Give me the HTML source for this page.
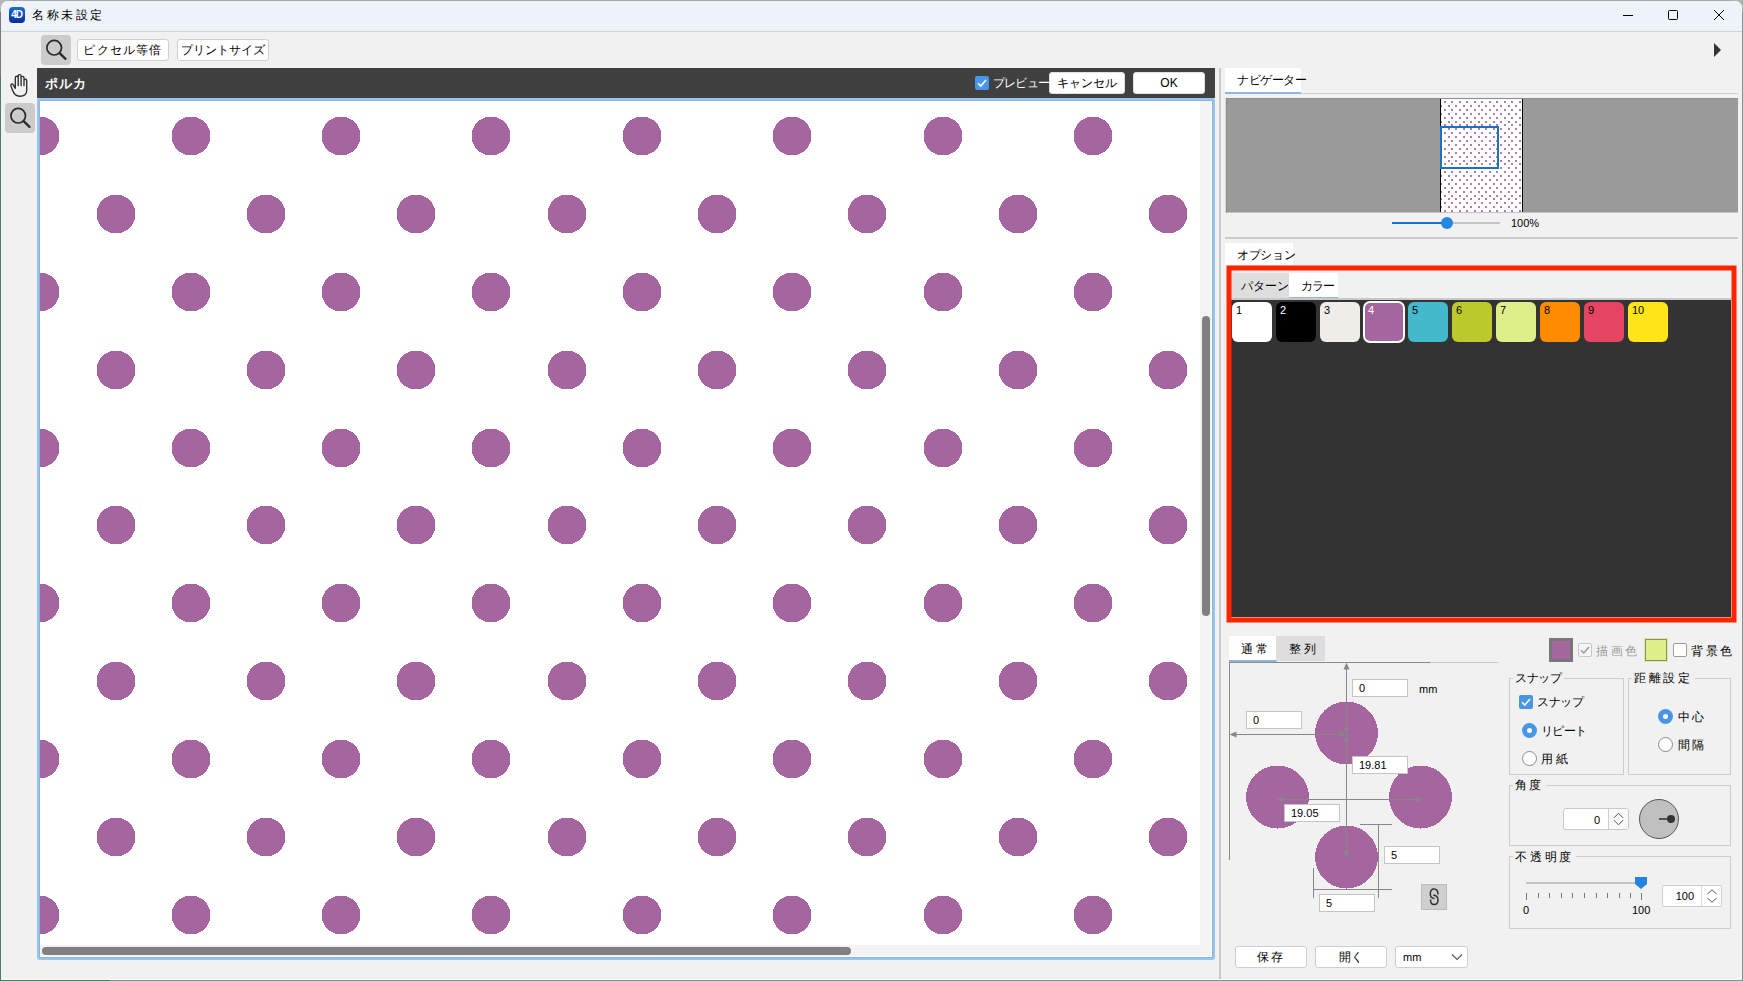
<!DOCTYPE html>
<html><head><meta charset="utf-8">
<style>
*{box-sizing:border-box;margin:0;padding:0}
html,body{width:1743px;height:981px;overflow:hidden}
body{background:#f1f1f1;font-family:"Liberation Sans",sans-serif;font-size:12px;color:#000;position:relative}
.a{position:absolute}
.btn{position:absolute;background:#fff;border:1px solid #cfcfcf;border-radius:3px;text-align:center;font-size:12px;line-height:20px;color:#000;white-space:nowrap}
.inp{position:absolute;background:#fff;border:1px solid #c4c4c4;font-size:11px;line-height:16px;padding-left:6px;color:#000}
.t{position:absolute;white-space:nowrap;font-size:12px;line-height:14px}
.sw{position:absolute;top:302px;width:40px;height:40px;border-radius:6px;font-size:11px;line-height:12px;padding:2px 0 0 4px}
.grp{position:absolute;border:1px solid #cdcdcd}
.gt{position:absolute;background:#f1f1f1;padding:0 2px;font-size:12px;line-height:14px;white-space:nowrap}
</style></head><body>
<!-- desktop edges -->
<div class="a" style="left:0;top:0;width:1px;height:981px;background:#4e7a68"></div><div class="a" style="left:0;top:0;width:1px;height:76px;background:#7a7a7a"></div>
<div class="a" style="left:0;top:980px;width:1743px;height:1px;background:#8a8f92"></div><div class="a" style="left:0;top:980px;width:110px;height:1px;background:#4e7a68"></div>
<div class="a" style="left:1742px;top:0;width:1px;height:981px;background:#8f8f8f"></div>
<div class="a" style="left:0;top:0;width:1743px;height:1px;background:#a9a9a9"></div>
<div class="a" style="left:0;top:0;width:12px;height:12px;background:#b4b4b4"></div><div class="a" style="left:1731px;top:0;width:12px;height:12px;background:#b4b4b4"></div>
<div class="a" style="left:1px;top:1px;width:1741px;height:979px;background:#f1f1f1;border-radius:7px 7px 5px 5px;box-shadow:inset 0 -1px 0 #fbfbfb"></div>
<!-- title bar -->
<div class="a" style="left:1px;top:1px;width:1741px;height:31px;background:#eef3f9;border-bottom:1px solid #d2d2d2;border-radius:7px 7px 0 0"></div>
<div class="a" style="left:9px;top:7px;width:16px;height:16px;border-radius:4px;background:linear-gradient(#1a6fd0,#0a2a9a);color:#fff;font-size:10px;font-weight:bold;line-height:16px;text-align:center;letter-spacing:-1.2px;text-indent:-1px">4D</div>
<div class="t" style="left:32px;top:8px;font-size:12px;line-height:15px;letter-spacing:2.6px">名称未設定</div>
<div class="a" style="left:1623px;top:15px;width:10px;height:1px;background:#000"></div>
<div class="a" style="left:1668px;top:10px;width:10px;height:10px;border:1px solid #000;border-radius:1.5px"></div>
<svg class="a" style="left:1713px;top:9px" width="12" height="12" viewBox="0 0 12 12"><path d="M1 1L11 11M11 1L1 11" stroke="#000" stroke-width="1"/></svg>
<!-- toolbar -->
<div class="a" style="left:41px;top:35px;width:30px;height:30px;background:#cbcbcb;border-radius:4px"></div>
<svg class="a" style="left:41px;top:35px" width="30" height="30" viewBox="0 0 30 30"><circle cx="13.2" cy="12.7" r="7.3" fill="none" stroke="#2a2a2a" stroke-width="1.7"/><path d="M18.6 18.2L24.5 23.9" stroke="#2a2a2a" stroke-width="2.3" stroke-linecap="round"/></svg>
<div class="btn" style="left:77px;top:39px;width:92px;height:22px;letter-spacing:1.2px">ピクセル等倍</div>
<div class="btn" style="left:177px;top:39px;width:92px;height:22px">プリントサイズ</div>
<svg class="a" style="left:1713px;top:42px" width="10" height="16" viewBox="0 0 10 16"><path d="M1 1L8 8L1 15Z" fill="#333"/></svg>
<!-- left tools -->
<svg class="a" style="left:6px;top:70px" width="26" height="30" viewBox="0 0 26 30"><path d="M9.3 18.3V7.7a1.45 1.45 0 0 1 2.9 0V15.6M12.2 7.7V6.1a1.45 1.45 0 0 1 2.9 0V15.6M15.1 7.8a1.45 1.45 0 0 1 2.9 0V15.6M18 10.6a1.35 1.35 0 0 1 2.7 0V20.8C20.7 24.4 18 26.2 13.8 26.2C10.2 26.2 7.6 23.8 6.6 20.3L4.8 15.7a1.3 1.3 0 0 1 2.3 -1.1L9.3 18.3" fill="none" stroke="#2e2e2e" stroke-width="1.35" stroke-linejoin="round" stroke-linecap="round"/></svg>
<div class="a" style="left:5px;top:103px;width:30px;height:30px;background:#cbcbcb;border-radius:4px"></div>
<svg class="a" style="left:5px;top:103px" width="30" height="30" viewBox="0 0 30 30"><circle cx="13.2" cy="12.7" r="7.3" fill="none" stroke="#2a2a2a" stroke-width="1.7"/><path d="M18.6 18.2L24.5 23.9" stroke="#2a2a2a" stroke-width="2.3" stroke-linecap="round"/></svg>
<!-- CANVAS -->
<div class="a" style="left:37px;top:68px;width:1178px;height:30px;background:#404040"></div>
<div class="t" style="left:45px;top:76px;color:#fff;font-weight:bold;font-size:13px;line-height:15px;letter-spacing:1px">ポルカ</div>
<div class="a" style="left:975px;top:76px;width:14px;height:14px;background:#4a96e6;border-radius:2px"></div>
<svg class="a" style="left:975px;top:76px" width="14" height="14" viewBox="0 0 14 14"><path d="M3 7.2L5.8 10L11 4" fill="none" stroke="#fff" stroke-width="1.6"/></svg>
<div class="t" style="left:993px;top:76px;color:#fff;letter-spacing:-0.8px">プレビュー</div>
<div class="btn" style="left:1049px;top:72px;width:76px;height:22px;border-color:#e0e0e0">キャンセル</div>
<div class="btn" style="left:1133px;top:72px;width:72px;height:22px;border-color:#e0e0e0">OK</div>
<div class="a" style="left:37px;top:98px;width:1178px;height:862px;border:2px solid #98c5ed;box-shadow:inset 0 0 0 1px #88b4de;background:#fff;border-radius:2px 2px 3px 3px"></div>
<svg class="a" style="left:40px;top:101px" width="1160" height="844" viewBox="0 0 1160 844"><path fill="#a5669f" d="M-6 16h12v1h2v1h2v1h2v1h1v1h1v1h1v1h1v2h1v2h1v2h1v12h-1v2h-1v2h-1v2h-1v1h-1v1h-1v1h-1v1h-2v1h-2v1h-2v1h-12v-1h-2v-1h-2v-1h-2v-1h-1v-1h-1v-1h-1v-1h-1v-2h-1v-2h-1v-2h-1v-12h1v-2h1v-2h1v-2h1v-1h1v-1h1v-1h1v-1h2v-1h2v-1h2v-1zM145 16h12v1h2v1h2v1h2v1h1v1h1v1h1v1h1v2h1v2h1v2h1v12h-1v2h-1v2h-1v2h-1v1h-1v1h-1v1h-1v1h-2v1h-2v1h-2v1h-12v-1h-2v-1h-2v-1h-2v-1h-1v-1h-1v-1h-1v-1h-1v-2h-1v-2h-1v-2h-1v-12h1v-2h1v-2h1v-2h1v-1h1v-1h1v-1h1v-1h2v-1h2v-1h2v-1zM295 16h12v1h2v1h2v1h2v1h1v1h1v1h1v1h1v2h1v2h1v2h1v12h-1v2h-1v2h-1v2h-1v1h-1v1h-1v1h-1v1h-2v1h-2v1h-2v1h-12v-1h-2v-1h-2v-1h-2v-1h-1v-1h-1v-1h-1v-1h-1v-2h-1v-2h-1v-2h-1v-12h1v-2h1v-2h1v-2h1v-1h1v-1h1v-1h1v-1h2v-1h2v-1h2v-1zM445 16h12v1h2v1h2v1h2v1h1v1h1v1h1v1h1v2h1v2h1v2h1v12h-1v2h-1v2h-1v2h-1v1h-1v1h-1v1h-1v1h-2v1h-2v1h-2v1h-12v-1h-2v-1h-2v-1h-2v-1h-1v-1h-1v-1h-1v-1h-1v-2h-1v-2h-1v-2h-1v-12h1v-2h1v-2h1v-2h1v-1h1v-1h1v-1h1v-1h2v-1h2v-1h2v-1zM596 16h12v1h2v1h2v1h2v1h1v1h1v1h1v1h1v2h1v2h1v2h1v12h-1v2h-1v2h-1v2h-1v1h-1v1h-1v1h-1v1h-2v1h-2v1h-2v1h-12v-1h-2v-1h-2v-1h-2v-1h-1v-1h-1v-1h-1v-1h-1v-2h-1v-2h-1v-2h-1v-12h1v-2h1v-2h1v-2h1v-1h1v-1h1v-1h1v-1h2v-1h2v-1h2v-1zM746 16h12v1h2v1h2v1h2v1h1v1h1v1h1v1h1v2h1v2h1v2h1v12h-1v2h-1v2h-1v2h-1v1h-1v1h-1v1h-1v1h-2v1h-2v1h-2v1h-12v-1h-2v-1h-2v-1h-2v-1h-1v-1h-1v-1h-1v-1h-1v-2h-1v-2h-1v-2h-1v-12h1v-2h1v-2h1v-2h1v-1h1v-1h1v-1h1v-1h2v-1h2v-1h2v-1zM897 16h12v1h2v1h2v1h2v1h1v1h1v1h1v1h1v2h1v2h1v2h1v12h-1v2h-1v2h-1v2h-1v1h-1v1h-1v1h-1v1h-2v1h-2v1h-2v1h-12v-1h-2v-1h-2v-1h-2v-1h-1v-1h-1v-1h-1v-1h-1v-2h-1v-2h-1v-2h-1v-12h1v-2h1v-2h1v-2h1v-1h1v-1h1v-1h1v-1h2v-1h2v-1h2v-1zM1047 16h12v1h2v1h2v1h2v1h1v1h1v1h1v1h1v2h1v2h1v2h1v12h-1v2h-1v2h-1v2h-1v1h-1v1h-1v1h-1v1h-2v1h-2v1h-2v1h-12v-1h-2v-1h-2v-1h-2v-1h-1v-1h-1v-1h-1v-1h-1v-2h-1v-2h-1v-2h-1v-12h1v-2h1v-2h1v-2h1v-1h1v-1h1v-1h1v-1h2v-1h2v-1h2v-1zM70 94h12v1h2v1h2v1h2v1h1v1h1v1h1v1h1v2h1v2h1v2h1v12h-1v2h-1v2h-1v2h-1v1h-1v1h-1v1h-1v1h-2v1h-2v1h-2v1h-12v-1h-2v-1h-2v-1h-2v-1h-1v-1h-1v-1h-1v-1h-1v-2h-1v-2h-1v-2h-1v-12h1v-2h1v-2h1v-2h1v-1h1v-1h1v-1h1v-1h2v-1h2v-1h2v-1zM220 94h12v1h2v1h2v1h2v1h1v1h1v1h1v1h1v2h1v2h1v2h1v12h-1v2h-1v2h-1v2h-1v1h-1v1h-1v1h-1v1h-2v1h-2v1h-2v1h-12v-1h-2v-1h-2v-1h-2v-1h-1v-1h-1v-1h-1v-1h-1v-2h-1v-2h-1v-2h-1v-12h1v-2h1v-2h1v-2h1v-1h1v-1h1v-1h1v-1h2v-1h2v-1h2v-1zM370 94h12v1h2v1h2v1h2v1h1v1h1v1h1v1h1v2h1v2h1v2h1v12h-1v2h-1v2h-1v2h-1v1h-1v1h-1v1h-1v1h-2v1h-2v1h-2v1h-12v-1h-2v-1h-2v-1h-2v-1h-1v-1h-1v-1h-1v-1h-1v-2h-1v-2h-1v-2h-1v-12h1v-2h1v-2h1v-2h1v-1h1v-1h1v-1h1v-1h2v-1h2v-1h2v-1zM521 94h12v1h2v1h2v1h2v1h1v1h1v1h1v1h1v2h1v2h1v2h1v12h-1v2h-1v2h-1v2h-1v1h-1v1h-1v1h-1v1h-2v1h-2v1h-2v1h-12v-1h-2v-1h-2v-1h-2v-1h-1v-1h-1v-1h-1v-1h-1v-2h-1v-2h-1v-2h-1v-12h1v-2h1v-2h1v-2h1v-1h1v-1h1v-1h1v-1h2v-1h2v-1h2v-1zM671 94h12v1h2v1h2v1h2v1h1v1h1v1h1v1h1v2h1v2h1v2h1v12h-1v2h-1v2h-1v2h-1v1h-1v1h-1v1h-1v1h-2v1h-2v1h-2v1h-12v-1h-2v-1h-2v-1h-2v-1h-1v-1h-1v-1h-1v-1h-1v-2h-1v-2h-1v-2h-1v-12h1v-2h1v-2h1v-2h1v-1h1v-1h1v-1h1v-1h2v-1h2v-1h2v-1zM821 94h12v1h2v1h2v1h2v1h1v1h1v1h1v1h1v2h1v2h1v2h1v12h-1v2h-1v2h-1v2h-1v1h-1v1h-1v1h-1v1h-2v1h-2v1h-2v1h-12v-1h-2v-1h-2v-1h-2v-1h-1v-1h-1v-1h-1v-1h-1v-2h-1v-2h-1v-2h-1v-12h1v-2h1v-2h1v-2h1v-1h1v-1h1v-1h1v-1h2v-1h2v-1h2v-1zM972 94h12v1h2v1h2v1h2v1h1v1h1v1h1v1h1v2h1v2h1v2h1v12h-1v2h-1v2h-1v2h-1v1h-1v1h-1v1h-1v1h-2v1h-2v1h-2v1h-12v-1h-2v-1h-2v-1h-2v-1h-1v-1h-1v-1h-1v-1h-1v-2h-1v-2h-1v-2h-1v-12h1v-2h1v-2h1v-2h1v-1h1v-1h1v-1h1v-1h2v-1h2v-1h2v-1zM1122 94h12v1h2v1h2v1h2v1h1v1h1v1h1v1h1v2h1v2h1v2h1v12h-1v2h-1v2h-1v2h-1v1h-1v1h-1v1h-1v1h-2v1h-2v1h-2v1h-12v-1h-2v-1h-2v-1h-2v-1h-1v-1h-1v-1h-1v-1h-1v-2h-1v-2h-1v-2h-1v-12h1v-2h1v-2h1v-2h1v-1h1v-1h1v-1h1v-1h2v-1h2v-1h2v-1zM-6 172h12v1h2v1h2v1h2v1h1v1h1v1h1v1h1v2h1v2h1v2h1v12h-1v2h-1v2h-1v2h-1v1h-1v1h-1v1h-1v1h-2v1h-2v1h-2v1h-12v-1h-2v-1h-2v-1h-2v-1h-1v-1h-1v-1h-1v-1h-1v-2h-1v-2h-1v-2h-1v-12h1v-2h1v-2h1v-2h1v-1h1v-1h1v-1h1v-1h2v-1h2v-1h2v-1zM145 172h12v1h2v1h2v1h2v1h1v1h1v1h1v1h1v2h1v2h1v2h1v12h-1v2h-1v2h-1v2h-1v1h-1v1h-1v1h-1v1h-2v1h-2v1h-2v1h-12v-1h-2v-1h-2v-1h-2v-1h-1v-1h-1v-1h-1v-1h-1v-2h-1v-2h-1v-2h-1v-12h1v-2h1v-2h1v-2h1v-1h1v-1h1v-1h1v-1h2v-1h2v-1h2v-1zM295 172h12v1h2v1h2v1h2v1h1v1h1v1h1v1h1v2h1v2h1v2h1v12h-1v2h-1v2h-1v2h-1v1h-1v1h-1v1h-1v1h-2v1h-2v1h-2v1h-12v-1h-2v-1h-2v-1h-2v-1h-1v-1h-1v-1h-1v-1h-1v-2h-1v-2h-1v-2h-1v-12h1v-2h1v-2h1v-2h1v-1h1v-1h1v-1h1v-1h2v-1h2v-1h2v-1zM445 172h12v1h2v1h2v1h2v1h1v1h1v1h1v1h1v2h1v2h1v2h1v12h-1v2h-1v2h-1v2h-1v1h-1v1h-1v1h-1v1h-2v1h-2v1h-2v1h-12v-1h-2v-1h-2v-1h-2v-1h-1v-1h-1v-1h-1v-1h-1v-2h-1v-2h-1v-2h-1v-12h1v-2h1v-2h1v-2h1v-1h1v-1h1v-1h1v-1h2v-1h2v-1h2v-1zM596 172h12v1h2v1h2v1h2v1h1v1h1v1h1v1h1v2h1v2h1v2h1v12h-1v2h-1v2h-1v2h-1v1h-1v1h-1v1h-1v1h-2v1h-2v1h-2v1h-12v-1h-2v-1h-2v-1h-2v-1h-1v-1h-1v-1h-1v-1h-1v-2h-1v-2h-1v-2h-1v-12h1v-2h1v-2h1v-2h1v-1h1v-1h1v-1h1v-1h2v-1h2v-1h2v-1zM746 172h12v1h2v1h2v1h2v1h1v1h1v1h1v1h1v2h1v2h1v2h1v12h-1v2h-1v2h-1v2h-1v1h-1v1h-1v1h-1v1h-2v1h-2v1h-2v1h-12v-1h-2v-1h-2v-1h-2v-1h-1v-1h-1v-1h-1v-1h-1v-2h-1v-2h-1v-2h-1v-12h1v-2h1v-2h1v-2h1v-1h1v-1h1v-1h1v-1h2v-1h2v-1h2v-1zM897 172h12v1h2v1h2v1h2v1h1v1h1v1h1v1h1v2h1v2h1v2h1v12h-1v2h-1v2h-1v2h-1v1h-1v1h-1v1h-1v1h-2v1h-2v1h-2v1h-12v-1h-2v-1h-2v-1h-2v-1h-1v-1h-1v-1h-1v-1h-1v-2h-1v-2h-1v-2h-1v-12h1v-2h1v-2h1v-2h1v-1h1v-1h1v-1h1v-1h2v-1h2v-1h2v-1zM1047 172h12v1h2v1h2v1h2v1h1v1h1v1h1v1h1v2h1v2h1v2h1v12h-1v2h-1v2h-1v2h-1v1h-1v1h-1v1h-1v1h-2v1h-2v1h-2v1h-12v-1h-2v-1h-2v-1h-2v-1h-1v-1h-1v-1h-1v-1h-1v-2h-1v-2h-1v-2h-1v-12h1v-2h1v-2h1v-2h1v-1h1v-1h1v-1h1v-1h2v-1h2v-1h2v-1zM70 250h12v1h2v1h2v1h2v1h1v1h1v1h1v1h1v2h1v2h1v2h1v12h-1v2h-1v2h-1v2h-1v1h-1v1h-1v1h-1v1h-2v1h-2v1h-2v1h-12v-1h-2v-1h-2v-1h-2v-1h-1v-1h-1v-1h-1v-1h-1v-2h-1v-2h-1v-2h-1v-12h1v-2h1v-2h1v-2h1v-1h1v-1h1v-1h1v-1h2v-1h2v-1h2v-1zM220 250h12v1h2v1h2v1h2v1h1v1h1v1h1v1h1v2h1v2h1v2h1v12h-1v2h-1v2h-1v2h-1v1h-1v1h-1v1h-1v1h-2v1h-2v1h-2v1h-12v-1h-2v-1h-2v-1h-2v-1h-1v-1h-1v-1h-1v-1h-1v-2h-1v-2h-1v-2h-1v-12h1v-2h1v-2h1v-2h1v-1h1v-1h1v-1h1v-1h2v-1h2v-1h2v-1zM370 250h12v1h2v1h2v1h2v1h1v1h1v1h1v1h1v2h1v2h1v2h1v12h-1v2h-1v2h-1v2h-1v1h-1v1h-1v1h-1v1h-2v1h-2v1h-2v1h-12v-1h-2v-1h-2v-1h-2v-1h-1v-1h-1v-1h-1v-1h-1v-2h-1v-2h-1v-2h-1v-12h1v-2h1v-2h1v-2h1v-1h1v-1h1v-1h1v-1h2v-1h2v-1h2v-1zM521 250h12v1h2v1h2v1h2v1h1v1h1v1h1v1h1v2h1v2h1v2h1v12h-1v2h-1v2h-1v2h-1v1h-1v1h-1v1h-1v1h-2v1h-2v1h-2v1h-12v-1h-2v-1h-2v-1h-2v-1h-1v-1h-1v-1h-1v-1h-1v-2h-1v-2h-1v-2h-1v-12h1v-2h1v-2h1v-2h1v-1h1v-1h1v-1h1v-1h2v-1h2v-1h2v-1zM671 250h12v1h2v1h2v1h2v1h1v1h1v1h1v1h1v2h1v2h1v2h1v12h-1v2h-1v2h-1v2h-1v1h-1v1h-1v1h-1v1h-2v1h-2v1h-2v1h-12v-1h-2v-1h-2v-1h-2v-1h-1v-1h-1v-1h-1v-1h-1v-2h-1v-2h-1v-2h-1v-12h1v-2h1v-2h1v-2h1v-1h1v-1h1v-1h1v-1h2v-1h2v-1h2v-1zM821 250h12v1h2v1h2v1h2v1h1v1h1v1h1v1h1v2h1v2h1v2h1v12h-1v2h-1v2h-1v2h-1v1h-1v1h-1v1h-1v1h-2v1h-2v1h-2v1h-12v-1h-2v-1h-2v-1h-2v-1h-1v-1h-1v-1h-1v-1h-1v-2h-1v-2h-1v-2h-1v-12h1v-2h1v-2h1v-2h1v-1h1v-1h1v-1h1v-1h2v-1h2v-1h2v-1zM972 250h12v1h2v1h2v1h2v1h1v1h1v1h1v1h1v2h1v2h1v2h1v12h-1v2h-1v2h-1v2h-1v1h-1v1h-1v1h-1v1h-2v1h-2v1h-2v1h-12v-1h-2v-1h-2v-1h-2v-1h-1v-1h-1v-1h-1v-1h-1v-2h-1v-2h-1v-2h-1v-12h1v-2h1v-2h1v-2h1v-1h1v-1h1v-1h1v-1h2v-1h2v-1h2v-1zM1122 250h12v1h2v1h2v1h2v1h1v1h1v1h1v1h1v2h1v2h1v2h1v12h-1v2h-1v2h-1v2h-1v1h-1v1h-1v1h-1v1h-2v1h-2v1h-2v1h-12v-1h-2v-1h-2v-1h-2v-1h-1v-1h-1v-1h-1v-1h-1v-2h-1v-2h-1v-2h-1v-12h1v-2h1v-2h1v-2h1v-1h1v-1h1v-1h1v-1h2v-1h2v-1h2v-1zM-6 328h12v1h2v1h2v1h2v1h1v1h1v1h1v1h1v2h1v2h1v2h1v12h-1v2h-1v2h-1v2h-1v1h-1v1h-1v1h-1v1h-2v1h-2v1h-2v1h-12v-1h-2v-1h-2v-1h-2v-1h-1v-1h-1v-1h-1v-1h-1v-2h-1v-2h-1v-2h-1v-12h1v-2h1v-2h1v-2h1v-1h1v-1h1v-1h1v-1h2v-1h2v-1h2v-1zM145 328h12v1h2v1h2v1h2v1h1v1h1v1h1v1h1v2h1v2h1v2h1v12h-1v2h-1v2h-1v2h-1v1h-1v1h-1v1h-1v1h-2v1h-2v1h-2v1h-12v-1h-2v-1h-2v-1h-2v-1h-1v-1h-1v-1h-1v-1h-1v-2h-1v-2h-1v-2h-1v-12h1v-2h1v-2h1v-2h1v-1h1v-1h1v-1h1v-1h2v-1h2v-1h2v-1zM295 328h12v1h2v1h2v1h2v1h1v1h1v1h1v1h1v2h1v2h1v2h1v12h-1v2h-1v2h-1v2h-1v1h-1v1h-1v1h-1v1h-2v1h-2v1h-2v1h-12v-1h-2v-1h-2v-1h-2v-1h-1v-1h-1v-1h-1v-1h-1v-2h-1v-2h-1v-2h-1v-12h1v-2h1v-2h1v-2h1v-1h1v-1h1v-1h1v-1h2v-1h2v-1h2v-1zM445 328h12v1h2v1h2v1h2v1h1v1h1v1h1v1h1v2h1v2h1v2h1v12h-1v2h-1v2h-1v2h-1v1h-1v1h-1v1h-1v1h-2v1h-2v1h-2v1h-12v-1h-2v-1h-2v-1h-2v-1h-1v-1h-1v-1h-1v-1h-1v-2h-1v-2h-1v-2h-1v-12h1v-2h1v-2h1v-2h1v-1h1v-1h1v-1h1v-1h2v-1h2v-1h2v-1zM596 328h12v1h2v1h2v1h2v1h1v1h1v1h1v1h1v2h1v2h1v2h1v12h-1v2h-1v2h-1v2h-1v1h-1v1h-1v1h-1v1h-2v1h-2v1h-2v1h-12v-1h-2v-1h-2v-1h-2v-1h-1v-1h-1v-1h-1v-1h-1v-2h-1v-2h-1v-2h-1v-12h1v-2h1v-2h1v-2h1v-1h1v-1h1v-1h1v-1h2v-1h2v-1h2v-1zM746 328h12v1h2v1h2v1h2v1h1v1h1v1h1v1h1v2h1v2h1v2h1v12h-1v2h-1v2h-1v2h-1v1h-1v1h-1v1h-1v1h-2v1h-2v1h-2v1h-12v-1h-2v-1h-2v-1h-2v-1h-1v-1h-1v-1h-1v-1h-1v-2h-1v-2h-1v-2h-1v-12h1v-2h1v-2h1v-2h1v-1h1v-1h1v-1h1v-1h2v-1h2v-1h2v-1zM897 328h12v1h2v1h2v1h2v1h1v1h1v1h1v1h1v2h1v2h1v2h1v12h-1v2h-1v2h-1v2h-1v1h-1v1h-1v1h-1v1h-2v1h-2v1h-2v1h-12v-1h-2v-1h-2v-1h-2v-1h-1v-1h-1v-1h-1v-1h-1v-2h-1v-2h-1v-2h-1v-12h1v-2h1v-2h1v-2h1v-1h1v-1h1v-1h1v-1h2v-1h2v-1h2v-1zM1047 328h12v1h2v1h2v1h2v1h1v1h1v1h1v1h1v2h1v2h1v2h1v12h-1v2h-1v2h-1v2h-1v1h-1v1h-1v1h-1v1h-2v1h-2v1h-2v1h-12v-1h-2v-1h-2v-1h-2v-1h-1v-1h-1v-1h-1v-1h-1v-2h-1v-2h-1v-2h-1v-12h1v-2h1v-2h1v-2h1v-1h1v-1h1v-1h1v-1h2v-1h2v-1h2v-1zM70 405h12v1h2v1h2v1h2v1h1v1h1v1h1v1h1v2h1v2h1v2h1v12h-1v2h-1v2h-1v2h-1v1h-1v1h-1v1h-1v1h-2v1h-2v1h-2v1h-12v-1h-2v-1h-2v-1h-2v-1h-1v-1h-1v-1h-1v-1h-1v-2h-1v-2h-1v-2h-1v-12h1v-2h1v-2h1v-2h1v-1h1v-1h1v-1h1v-1h2v-1h2v-1h2v-1zM220 405h12v1h2v1h2v1h2v1h1v1h1v1h1v1h1v2h1v2h1v2h1v12h-1v2h-1v2h-1v2h-1v1h-1v1h-1v1h-1v1h-2v1h-2v1h-2v1h-12v-1h-2v-1h-2v-1h-2v-1h-1v-1h-1v-1h-1v-1h-1v-2h-1v-2h-1v-2h-1v-12h1v-2h1v-2h1v-2h1v-1h1v-1h1v-1h1v-1h2v-1h2v-1h2v-1zM370 405h12v1h2v1h2v1h2v1h1v1h1v1h1v1h1v2h1v2h1v2h1v12h-1v2h-1v2h-1v2h-1v1h-1v1h-1v1h-1v1h-2v1h-2v1h-2v1h-12v-1h-2v-1h-2v-1h-2v-1h-1v-1h-1v-1h-1v-1h-1v-2h-1v-2h-1v-2h-1v-12h1v-2h1v-2h1v-2h1v-1h1v-1h1v-1h1v-1h2v-1h2v-1h2v-1zM521 405h12v1h2v1h2v1h2v1h1v1h1v1h1v1h1v2h1v2h1v2h1v12h-1v2h-1v2h-1v2h-1v1h-1v1h-1v1h-1v1h-2v1h-2v1h-2v1h-12v-1h-2v-1h-2v-1h-2v-1h-1v-1h-1v-1h-1v-1h-1v-2h-1v-2h-1v-2h-1v-12h1v-2h1v-2h1v-2h1v-1h1v-1h1v-1h1v-1h2v-1h2v-1h2v-1zM671 405h12v1h2v1h2v1h2v1h1v1h1v1h1v1h1v2h1v2h1v2h1v12h-1v2h-1v2h-1v2h-1v1h-1v1h-1v1h-1v1h-2v1h-2v1h-2v1h-12v-1h-2v-1h-2v-1h-2v-1h-1v-1h-1v-1h-1v-1h-1v-2h-1v-2h-1v-2h-1v-12h1v-2h1v-2h1v-2h1v-1h1v-1h1v-1h1v-1h2v-1h2v-1h2v-1zM821 405h12v1h2v1h2v1h2v1h1v1h1v1h1v1h1v2h1v2h1v2h1v12h-1v2h-1v2h-1v2h-1v1h-1v1h-1v1h-1v1h-2v1h-2v1h-2v1h-12v-1h-2v-1h-2v-1h-2v-1h-1v-1h-1v-1h-1v-1h-1v-2h-1v-2h-1v-2h-1v-12h1v-2h1v-2h1v-2h1v-1h1v-1h1v-1h1v-1h2v-1h2v-1h2v-1zM972 405h12v1h2v1h2v1h2v1h1v1h1v1h1v1h1v2h1v2h1v2h1v12h-1v2h-1v2h-1v2h-1v1h-1v1h-1v1h-1v1h-2v1h-2v1h-2v1h-12v-1h-2v-1h-2v-1h-2v-1h-1v-1h-1v-1h-1v-1h-1v-2h-1v-2h-1v-2h-1v-12h1v-2h1v-2h1v-2h1v-1h1v-1h1v-1h1v-1h2v-1h2v-1h2v-1zM1122 405h12v1h2v1h2v1h2v1h1v1h1v1h1v1h1v2h1v2h1v2h1v12h-1v2h-1v2h-1v2h-1v1h-1v1h-1v1h-1v1h-2v1h-2v1h-2v1h-12v-1h-2v-1h-2v-1h-2v-1h-1v-1h-1v-1h-1v-1h-1v-2h-1v-2h-1v-2h-1v-12h1v-2h1v-2h1v-2h1v-1h1v-1h1v-1h1v-1h2v-1h2v-1h2v-1zM-6 483h12v1h2v1h2v1h2v1h1v1h1v1h1v1h1v2h1v2h1v2h1v12h-1v2h-1v2h-1v2h-1v1h-1v1h-1v1h-1v1h-2v1h-2v1h-2v1h-12v-1h-2v-1h-2v-1h-2v-1h-1v-1h-1v-1h-1v-1h-1v-2h-1v-2h-1v-2h-1v-12h1v-2h1v-2h1v-2h1v-1h1v-1h1v-1h1v-1h2v-1h2v-1h2v-1zM145 483h12v1h2v1h2v1h2v1h1v1h1v1h1v1h1v2h1v2h1v2h1v12h-1v2h-1v2h-1v2h-1v1h-1v1h-1v1h-1v1h-2v1h-2v1h-2v1h-12v-1h-2v-1h-2v-1h-2v-1h-1v-1h-1v-1h-1v-1h-1v-2h-1v-2h-1v-2h-1v-12h1v-2h1v-2h1v-2h1v-1h1v-1h1v-1h1v-1h2v-1h2v-1h2v-1zM295 483h12v1h2v1h2v1h2v1h1v1h1v1h1v1h1v2h1v2h1v2h1v12h-1v2h-1v2h-1v2h-1v1h-1v1h-1v1h-1v1h-2v1h-2v1h-2v1h-12v-1h-2v-1h-2v-1h-2v-1h-1v-1h-1v-1h-1v-1h-1v-2h-1v-2h-1v-2h-1v-12h1v-2h1v-2h1v-2h1v-1h1v-1h1v-1h1v-1h2v-1h2v-1h2v-1zM445 483h12v1h2v1h2v1h2v1h1v1h1v1h1v1h1v2h1v2h1v2h1v12h-1v2h-1v2h-1v2h-1v1h-1v1h-1v1h-1v1h-2v1h-2v1h-2v1h-12v-1h-2v-1h-2v-1h-2v-1h-1v-1h-1v-1h-1v-1h-1v-2h-1v-2h-1v-2h-1v-12h1v-2h1v-2h1v-2h1v-1h1v-1h1v-1h1v-1h2v-1h2v-1h2v-1zM596 483h12v1h2v1h2v1h2v1h1v1h1v1h1v1h1v2h1v2h1v2h1v12h-1v2h-1v2h-1v2h-1v1h-1v1h-1v1h-1v1h-2v1h-2v1h-2v1h-12v-1h-2v-1h-2v-1h-2v-1h-1v-1h-1v-1h-1v-1h-1v-2h-1v-2h-1v-2h-1v-12h1v-2h1v-2h1v-2h1v-1h1v-1h1v-1h1v-1h2v-1h2v-1h2v-1zM746 483h12v1h2v1h2v1h2v1h1v1h1v1h1v1h1v2h1v2h1v2h1v12h-1v2h-1v2h-1v2h-1v1h-1v1h-1v1h-1v1h-2v1h-2v1h-2v1h-12v-1h-2v-1h-2v-1h-2v-1h-1v-1h-1v-1h-1v-1h-1v-2h-1v-2h-1v-2h-1v-12h1v-2h1v-2h1v-2h1v-1h1v-1h1v-1h1v-1h2v-1h2v-1h2v-1zM897 483h12v1h2v1h2v1h2v1h1v1h1v1h1v1h1v2h1v2h1v2h1v12h-1v2h-1v2h-1v2h-1v1h-1v1h-1v1h-1v1h-2v1h-2v1h-2v1h-12v-1h-2v-1h-2v-1h-2v-1h-1v-1h-1v-1h-1v-1h-1v-2h-1v-2h-1v-2h-1v-12h1v-2h1v-2h1v-2h1v-1h1v-1h1v-1h1v-1h2v-1h2v-1h2v-1zM1047 483h12v1h2v1h2v1h2v1h1v1h1v1h1v1h1v2h1v2h1v2h1v12h-1v2h-1v2h-1v2h-1v1h-1v1h-1v1h-1v1h-2v1h-2v1h-2v1h-12v-1h-2v-1h-2v-1h-2v-1h-1v-1h-1v-1h-1v-1h-1v-2h-1v-2h-1v-2h-1v-12h1v-2h1v-2h1v-2h1v-1h1v-1h1v-1h1v-1h2v-1h2v-1h2v-1zM70 561h12v1h2v1h2v1h2v1h1v1h1v1h1v1h1v2h1v2h1v2h1v12h-1v2h-1v2h-1v2h-1v1h-1v1h-1v1h-1v1h-2v1h-2v1h-2v1h-12v-1h-2v-1h-2v-1h-2v-1h-1v-1h-1v-1h-1v-1h-1v-2h-1v-2h-1v-2h-1v-12h1v-2h1v-2h1v-2h1v-1h1v-1h1v-1h1v-1h2v-1h2v-1h2v-1zM220 561h12v1h2v1h2v1h2v1h1v1h1v1h1v1h1v2h1v2h1v2h1v12h-1v2h-1v2h-1v2h-1v1h-1v1h-1v1h-1v1h-2v1h-2v1h-2v1h-12v-1h-2v-1h-2v-1h-2v-1h-1v-1h-1v-1h-1v-1h-1v-2h-1v-2h-1v-2h-1v-12h1v-2h1v-2h1v-2h1v-1h1v-1h1v-1h1v-1h2v-1h2v-1h2v-1zM370 561h12v1h2v1h2v1h2v1h1v1h1v1h1v1h1v2h1v2h1v2h1v12h-1v2h-1v2h-1v2h-1v1h-1v1h-1v1h-1v1h-2v1h-2v1h-2v1h-12v-1h-2v-1h-2v-1h-2v-1h-1v-1h-1v-1h-1v-1h-1v-2h-1v-2h-1v-2h-1v-12h1v-2h1v-2h1v-2h1v-1h1v-1h1v-1h1v-1h2v-1h2v-1h2v-1zM521 561h12v1h2v1h2v1h2v1h1v1h1v1h1v1h1v2h1v2h1v2h1v12h-1v2h-1v2h-1v2h-1v1h-1v1h-1v1h-1v1h-2v1h-2v1h-2v1h-12v-1h-2v-1h-2v-1h-2v-1h-1v-1h-1v-1h-1v-1h-1v-2h-1v-2h-1v-2h-1v-12h1v-2h1v-2h1v-2h1v-1h1v-1h1v-1h1v-1h2v-1h2v-1h2v-1zM671 561h12v1h2v1h2v1h2v1h1v1h1v1h1v1h1v2h1v2h1v2h1v12h-1v2h-1v2h-1v2h-1v1h-1v1h-1v1h-1v1h-2v1h-2v1h-2v1h-12v-1h-2v-1h-2v-1h-2v-1h-1v-1h-1v-1h-1v-1h-1v-2h-1v-2h-1v-2h-1v-12h1v-2h1v-2h1v-2h1v-1h1v-1h1v-1h1v-1h2v-1h2v-1h2v-1zM821 561h12v1h2v1h2v1h2v1h1v1h1v1h1v1h1v2h1v2h1v2h1v12h-1v2h-1v2h-1v2h-1v1h-1v1h-1v1h-1v1h-2v1h-2v1h-2v1h-12v-1h-2v-1h-2v-1h-2v-1h-1v-1h-1v-1h-1v-1h-1v-2h-1v-2h-1v-2h-1v-12h1v-2h1v-2h1v-2h1v-1h1v-1h1v-1h1v-1h2v-1h2v-1h2v-1zM972 561h12v1h2v1h2v1h2v1h1v1h1v1h1v1h1v2h1v2h1v2h1v12h-1v2h-1v2h-1v2h-1v1h-1v1h-1v1h-1v1h-2v1h-2v1h-2v1h-12v-1h-2v-1h-2v-1h-2v-1h-1v-1h-1v-1h-1v-1h-1v-2h-1v-2h-1v-2h-1v-12h1v-2h1v-2h1v-2h1v-1h1v-1h1v-1h1v-1h2v-1h2v-1h2v-1zM1122 561h12v1h2v1h2v1h2v1h1v1h1v1h1v1h1v2h1v2h1v2h1v12h-1v2h-1v2h-1v2h-1v1h-1v1h-1v1h-1v1h-2v1h-2v1h-2v1h-12v-1h-2v-1h-2v-1h-2v-1h-1v-1h-1v-1h-1v-1h-1v-2h-1v-2h-1v-2h-1v-12h1v-2h1v-2h1v-2h1v-1h1v-1h1v-1h1v-1h2v-1h2v-1h2v-1zM-6 639h12v1h2v1h2v1h2v1h1v1h1v1h1v1h1v2h1v2h1v2h1v12h-1v2h-1v2h-1v2h-1v1h-1v1h-1v1h-1v1h-2v1h-2v1h-2v1h-12v-1h-2v-1h-2v-1h-2v-1h-1v-1h-1v-1h-1v-1h-1v-2h-1v-2h-1v-2h-1v-12h1v-2h1v-2h1v-2h1v-1h1v-1h1v-1h1v-1h2v-1h2v-1h2v-1zM145 639h12v1h2v1h2v1h2v1h1v1h1v1h1v1h1v2h1v2h1v2h1v12h-1v2h-1v2h-1v2h-1v1h-1v1h-1v1h-1v1h-2v1h-2v1h-2v1h-12v-1h-2v-1h-2v-1h-2v-1h-1v-1h-1v-1h-1v-1h-1v-2h-1v-2h-1v-2h-1v-12h1v-2h1v-2h1v-2h1v-1h1v-1h1v-1h1v-1h2v-1h2v-1h2v-1zM295 639h12v1h2v1h2v1h2v1h1v1h1v1h1v1h1v2h1v2h1v2h1v12h-1v2h-1v2h-1v2h-1v1h-1v1h-1v1h-1v1h-2v1h-2v1h-2v1h-12v-1h-2v-1h-2v-1h-2v-1h-1v-1h-1v-1h-1v-1h-1v-2h-1v-2h-1v-2h-1v-12h1v-2h1v-2h1v-2h1v-1h1v-1h1v-1h1v-1h2v-1h2v-1h2v-1zM445 639h12v1h2v1h2v1h2v1h1v1h1v1h1v1h1v2h1v2h1v2h1v12h-1v2h-1v2h-1v2h-1v1h-1v1h-1v1h-1v1h-2v1h-2v1h-2v1h-12v-1h-2v-1h-2v-1h-2v-1h-1v-1h-1v-1h-1v-1h-1v-2h-1v-2h-1v-2h-1v-12h1v-2h1v-2h1v-2h1v-1h1v-1h1v-1h1v-1h2v-1h2v-1h2v-1zM596 639h12v1h2v1h2v1h2v1h1v1h1v1h1v1h1v2h1v2h1v2h1v12h-1v2h-1v2h-1v2h-1v1h-1v1h-1v1h-1v1h-2v1h-2v1h-2v1h-12v-1h-2v-1h-2v-1h-2v-1h-1v-1h-1v-1h-1v-1h-1v-2h-1v-2h-1v-2h-1v-12h1v-2h1v-2h1v-2h1v-1h1v-1h1v-1h1v-1h2v-1h2v-1h2v-1zM746 639h12v1h2v1h2v1h2v1h1v1h1v1h1v1h1v2h1v2h1v2h1v12h-1v2h-1v2h-1v2h-1v1h-1v1h-1v1h-1v1h-2v1h-2v1h-2v1h-12v-1h-2v-1h-2v-1h-2v-1h-1v-1h-1v-1h-1v-1h-1v-2h-1v-2h-1v-2h-1v-12h1v-2h1v-2h1v-2h1v-1h1v-1h1v-1h1v-1h2v-1h2v-1h2v-1zM897 639h12v1h2v1h2v1h2v1h1v1h1v1h1v1h1v2h1v2h1v2h1v12h-1v2h-1v2h-1v2h-1v1h-1v1h-1v1h-1v1h-2v1h-2v1h-2v1h-12v-1h-2v-1h-2v-1h-2v-1h-1v-1h-1v-1h-1v-1h-1v-2h-1v-2h-1v-2h-1v-12h1v-2h1v-2h1v-2h1v-1h1v-1h1v-1h1v-1h2v-1h2v-1h2v-1zM1047 639h12v1h2v1h2v1h2v1h1v1h1v1h1v1h1v2h1v2h1v2h1v12h-1v2h-1v2h-1v2h-1v1h-1v1h-1v1h-1v1h-2v1h-2v1h-2v1h-12v-1h-2v-1h-2v-1h-2v-1h-1v-1h-1v-1h-1v-1h-1v-2h-1v-2h-1v-2h-1v-12h1v-2h1v-2h1v-2h1v-1h1v-1h1v-1h1v-1h2v-1h2v-1h2v-1zM70 717h12v1h2v1h2v1h2v1h1v1h1v1h1v1h1v2h1v2h1v2h1v12h-1v2h-1v2h-1v2h-1v1h-1v1h-1v1h-1v1h-2v1h-2v1h-2v1h-12v-1h-2v-1h-2v-1h-2v-1h-1v-1h-1v-1h-1v-1h-1v-2h-1v-2h-1v-2h-1v-12h1v-2h1v-2h1v-2h1v-1h1v-1h1v-1h1v-1h2v-1h2v-1h2v-1zM220 717h12v1h2v1h2v1h2v1h1v1h1v1h1v1h1v2h1v2h1v2h1v12h-1v2h-1v2h-1v2h-1v1h-1v1h-1v1h-1v1h-2v1h-2v1h-2v1h-12v-1h-2v-1h-2v-1h-2v-1h-1v-1h-1v-1h-1v-1h-1v-2h-1v-2h-1v-2h-1v-12h1v-2h1v-2h1v-2h1v-1h1v-1h1v-1h1v-1h2v-1h2v-1h2v-1zM370 717h12v1h2v1h2v1h2v1h1v1h1v1h1v1h1v2h1v2h1v2h1v12h-1v2h-1v2h-1v2h-1v1h-1v1h-1v1h-1v1h-2v1h-2v1h-2v1h-12v-1h-2v-1h-2v-1h-2v-1h-1v-1h-1v-1h-1v-1h-1v-2h-1v-2h-1v-2h-1v-12h1v-2h1v-2h1v-2h1v-1h1v-1h1v-1h1v-1h2v-1h2v-1h2v-1zM521 717h12v1h2v1h2v1h2v1h1v1h1v1h1v1h1v2h1v2h1v2h1v12h-1v2h-1v2h-1v2h-1v1h-1v1h-1v1h-1v1h-2v1h-2v1h-2v1h-12v-1h-2v-1h-2v-1h-2v-1h-1v-1h-1v-1h-1v-1h-1v-2h-1v-2h-1v-2h-1v-12h1v-2h1v-2h1v-2h1v-1h1v-1h1v-1h1v-1h2v-1h2v-1h2v-1zM671 717h12v1h2v1h2v1h2v1h1v1h1v1h1v1h1v2h1v2h1v2h1v12h-1v2h-1v2h-1v2h-1v1h-1v1h-1v1h-1v1h-2v1h-2v1h-2v1h-12v-1h-2v-1h-2v-1h-2v-1h-1v-1h-1v-1h-1v-1h-1v-2h-1v-2h-1v-2h-1v-12h1v-2h1v-2h1v-2h1v-1h1v-1h1v-1h1v-1h2v-1h2v-1h2v-1zM821 717h12v1h2v1h2v1h2v1h1v1h1v1h1v1h1v2h1v2h1v2h1v12h-1v2h-1v2h-1v2h-1v1h-1v1h-1v1h-1v1h-2v1h-2v1h-2v1h-12v-1h-2v-1h-2v-1h-2v-1h-1v-1h-1v-1h-1v-1h-1v-2h-1v-2h-1v-2h-1v-12h1v-2h1v-2h1v-2h1v-1h1v-1h1v-1h1v-1h2v-1h2v-1h2v-1zM972 717h12v1h2v1h2v1h2v1h1v1h1v1h1v1h1v2h1v2h1v2h1v12h-1v2h-1v2h-1v2h-1v1h-1v1h-1v1h-1v1h-2v1h-2v1h-2v1h-12v-1h-2v-1h-2v-1h-2v-1h-1v-1h-1v-1h-1v-1h-1v-2h-1v-2h-1v-2h-1v-12h1v-2h1v-2h1v-2h1v-1h1v-1h1v-1h1v-1h2v-1h2v-1h2v-1zM1122 717h12v1h2v1h2v1h2v1h1v1h1v1h1v1h1v2h1v2h1v2h1v12h-1v2h-1v2h-1v2h-1v1h-1v1h-1v1h-1v1h-2v1h-2v1h-2v1h-12v-1h-2v-1h-2v-1h-2v-1h-1v-1h-1v-1h-1v-1h-1v-2h-1v-2h-1v-2h-1v-12h1v-2h1v-2h1v-2h1v-1h1v-1h1v-1h1v-1h2v-1h2v-1h2v-1zM-6 795h12v1h2v1h2v1h2v1h1v1h1v1h1v1h1v2h1v2h1v2h1v12h-1v2h-1v2h-1v2h-1v1h-1v1h-1v1h-1v1h-2v1h-2v1h-2v1h-12v-1h-2v-1h-2v-1h-2v-1h-1v-1h-1v-1h-1v-1h-1v-2h-1v-2h-1v-2h-1v-12h1v-2h1v-2h1v-2h1v-1h1v-1h1v-1h1v-1h2v-1h2v-1h2v-1zM145 795h12v1h2v1h2v1h2v1h1v1h1v1h1v1h1v2h1v2h1v2h1v12h-1v2h-1v2h-1v2h-1v1h-1v1h-1v1h-1v1h-2v1h-2v1h-2v1h-12v-1h-2v-1h-2v-1h-2v-1h-1v-1h-1v-1h-1v-1h-1v-2h-1v-2h-1v-2h-1v-12h1v-2h1v-2h1v-2h1v-1h1v-1h1v-1h1v-1h2v-1h2v-1h2v-1zM295 795h12v1h2v1h2v1h2v1h1v1h1v1h1v1h1v2h1v2h1v2h1v12h-1v2h-1v2h-1v2h-1v1h-1v1h-1v1h-1v1h-2v1h-2v1h-2v1h-12v-1h-2v-1h-2v-1h-2v-1h-1v-1h-1v-1h-1v-1h-1v-2h-1v-2h-1v-2h-1v-12h1v-2h1v-2h1v-2h1v-1h1v-1h1v-1h1v-1h2v-1h2v-1h2v-1zM445 795h12v1h2v1h2v1h2v1h1v1h1v1h1v1h1v2h1v2h1v2h1v12h-1v2h-1v2h-1v2h-1v1h-1v1h-1v1h-1v1h-2v1h-2v1h-2v1h-12v-1h-2v-1h-2v-1h-2v-1h-1v-1h-1v-1h-1v-1h-1v-2h-1v-2h-1v-2h-1v-12h1v-2h1v-2h1v-2h1v-1h1v-1h1v-1h1v-1h2v-1h2v-1h2v-1zM596 795h12v1h2v1h2v1h2v1h1v1h1v1h1v1h1v2h1v2h1v2h1v12h-1v2h-1v2h-1v2h-1v1h-1v1h-1v1h-1v1h-2v1h-2v1h-2v1h-12v-1h-2v-1h-2v-1h-2v-1h-1v-1h-1v-1h-1v-1h-1v-2h-1v-2h-1v-2h-1v-12h1v-2h1v-2h1v-2h1v-1h1v-1h1v-1h1v-1h2v-1h2v-1h2v-1zM746 795h12v1h2v1h2v1h2v1h1v1h1v1h1v1h1v2h1v2h1v2h1v12h-1v2h-1v2h-1v2h-1v1h-1v1h-1v1h-1v1h-2v1h-2v1h-2v1h-12v-1h-2v-1h-2v-1h-2v-1h-1v-1h-1v-1h-1v-1h-1v-2h-1v-2h-1v-2h-1v-12h1v-2h1v-2h1v-2h1v-1h1v-1h1v-1h1v-1h2v-1h2v-1h2v-1zM897 795h12v1h2v1h2v1h2v1h1v1h1v1h1v1h1v2h1v2h1v2h1v12h-1v2h-1v2h-1v2h-1v1h-1v1h-1v1h-1v1h-2v1h-2v1h-2v1h-12v-1h-2v-1h-2v-1h-2v-1h-1v-1h-1v-1h-1v-1h-1v-2h-1v-2h-1v-2h-1v-12h1v-2h1v-2h1v-2h1v-1h1v-1h1v-1h1v-1h2v-1h2v-1h2v-1zM1047 795h12v1h2v1h2v1h2v1h1v1h1v1h1v1h1v2h1v2h1v2h1v12h-1v2h-1v2h-1v2h-1v1h-1v1h-1v1h-1v1h-2v1h-2v1h-2v1h-12v-1h-2v-1h-2v-1h-2v-1h-1v-1h-1v-1h-1v-1h-1v-2h-1v-2h-1v-2h-1v-12h1v-2h1v-2h1v-2h1v-1h1v-1h1v-1h1v-1h2v-1h2v-1h2v-1z"/></svg>
<div class="a" style="left:1200px;top:101px;width:11px;height:855px;background:#f3f3f3"></div>
<div class="a" style="left:40px;top:945px;width:1171px;height:11px;background:#f3f3f3"></div>
<div class="a" style="left:1202px;top:316px;width:8px;height:300px;background:#808080;border-radius:4px"></div>
<div class="a" style="left:42px;top:947px;width:809px;height:8px;background:#808080;border-radius:4px"></div>
<div class="a" style="left:1219px;top:68px;width:2px;height:911px;background:#c9c9c9"></div>

<!-- RIGHT -->
<div class="a" style="left:1225px;top:68px;width:76px;height:24px;background:#fff"></div>
<div class="t" style="left:1237px;top:73px;letter-spacing:-0.4px">ナビゲーター</div>
<div class="a" style="left:1225px;top:92px;width:76px;height:2px;background:#8fb5dd"></div>
<div class="a" style="left:1301px;top:93px;width:437px;height:1px;background:#d0d0d0"></div>
<div class="a" style="left:1225px;top:98px;width:1px;height:115px;background:#dadada"></div><div class="a" style="left:1226px;top:98px;width:512px;height:115px;background:#9a9a9a;border-top:1px solid #8e8e8e;border-left:1px solid #8e8e8e;border-bottom:1px solid #c4c4c4"></div>
<div class="a" style="left:1440px;top:99px;width:83px;height:113px;background:#fff;border-left:1px solid #000;border-right:1px solid #000"></div>
<svg class="a" style="left:1441px;top:99px" width="81" height="113" viewBox="0 0 81 113" shape-rendering="crispEdges"><g fill="#b07cac"><rect x="3" y="2" width="2" height="2"/><rect x="10" y="2" width="2" height="2"/><rect x="18" y="2" width="2" height="2"/><rect x="25" y="2" width="2" height="2"/><rect x="33" y="2" width="2" height="2"/><rect x="40" y="2" width="2" height="2"/><rect x="48" y="2" width="2" height="2"/><rect x="55" y="2" width="2" height="2"/><rect x="63" y="2" width="2" height="2"/><rect x="70" y="2" width="2" height="2"/><rect x="78" y="2" width="2" height="2"/><rect x="-1" y="6" width="2" height="2"/><rect x="7" y="6" width="2" height="2"/><rect x="14" y="6" width="2" height="2"/><rect x="22" y="6" width="2" height="2"/><rect x="29" y="6" width="2" height="2"/><rect x="37" y="6" width="2" height="2"/><rect x="44" y="6" width="2" height="2"/><rect x="52" y="6" width="2" height="2"/><rect x="59" y="6" width="2" height="2"/><rect x="67" y="6" width="2" height="2"/><rect x="74" y="6" width="2" height="2"/><rect x="3" y="10" width="2" height="2"/><rect x="10" y="10" width="2" height="2"/><rect x="18" y="10" width="2" height="2"/><rect x="25" y="10" width="2" height="2"/><rect x="33" y="10" width="2" height="2"/><rect x="40" y="10" width="2" height="2"/><rect x="48" y="10" width="2" height="2"/><rect x="55" y="10" width="2" height="2"/><rect x="63" y="10" width="2" height="2"/><rect x="70" y="10" width="2" height="2"/><rect x="78" y="10" width="2" height="2"/><rect x="-1" y="14" width="2" height="2"/><rect x="7" y="14" width="2" height="2"/><rect x="14" y="14" width="2" height="2"/><rect x="22" y="14" width="2" height="2"/><rect x="29" y="14" width="2" height="2"/><rect x="37" y="14" width="2" height="2"/><rect x="44" y="14" width="2" height="2"/><rect x="52" y="14" width="2" height="2"/><rect x="59" y="14" width="2" height="2"/><rect x="67" y="14" width="2" height="2"/><rect x="74" y="14" width="2" height="2"/><rect x="3" y="18" width="2" height="2"/><rect x="10" y="18" width="2" height="2"/><rect x="18" y="18" width="2" height="2"/><rect x="25" y="18" width="2" height="2"/><rect x="33" y="18" width="2" height="2"/><rect x="40" y="18" width="2" height="2"/><rect x="48" y="18" width="2" height="2"/><rect x="55" y="18" width="2" height="2"/><rect x="63" y="18" width="2" height="2"/><rect x="70" y="18" width="2" height="2"/><rect x="78" y="18" width="2" height="2"/><rect x="-1" y="22" width="2" height="2"/><rect x="7" y="22" width="2" height="2"/><rect x="14" y="22" width="2" height="2"/><rect x="22" y="22" width="2" height="2"/><rect x="29" y="22" width="2" height="2"/><rect x="37" y="22" width="2" height="2"/><rect x="44" y="22" width="2" height="2"/><rect x="52" y="22" width="2" height="2"/><rect x="59" y="22" width="2" height="2"/><rect x="67" y="22" width="2" height="2"/><rect x="74" y="22" width="2" height="2"/><rect x="3" y="25" width="2" height="2"/><rect x="10" y="25" width="2" height="2"/><rect x="18" y="25" width="2" height="2"/><rect x="25" y="25" width="2" height="2"/><rect x="33" y="25" width="2" height="2"/><rect x="40" y="25" width="2" height="2"/><rect x="48" y="25" width="2" height="2"/><rect x="55" y="25" width="2" height="2"/><rect x="63" y="25" width="2" height="2"/><rect x="70" y="25" width="2" height="2"/><rect x="78" y="25" width="2" height="2"/><rect x="-1" y="29" width="2" height="2"/><rect x="7" y="29" width="2" height="2"/><rect x="14" y="29" width="2" height="2"/><rect x="22" y="29" width="2" height="2"/><rect x="29" y="29" width="2" height="2"/><rect x="37" y="29" width="2" height="2"/><rect x="44" y="29" width="2" height="2"/><rect x="52" y="29" width="2" height="2"/><rect x="59" y="29" width="2" height="2"/><rect x="67" y="29" width="2" height="2"/><rect x="74" y="29" width="2" height="2"/><rect x="3" y="33" width="2" height="2"/><rect x="10" y="33" width="2" height="2"/><rect x="18" y="33" width="2" height="2"/><rect x="25" y="33" width="2" height="2"/><rect x="33" y="33" width="2" height="2"/><rect x="40" y="33" width="2" height="2"/><rect x="48" y="33" width="2" height="2"/><rect x="55" y="33" width="2" height="2"/><rect x="63" y="33" width="2" height="2"/><rect x="70" y="33" width="2" height="2"/><rect x="78" y="33" width="2" height="2"/><rect x="-1" y="37" width="2" height="2"/><rect x="7" y="37" width="2" height="2"/><rect x="14" y="37" width="2" height="2"/><rect x="22" y="37" width="2" height="2"/><rect x="29" y="37" width="2" height="2"/><rect x="37" y="37" width="2" height="2"/><rect x="44" y="37" width="2" height="2"/><rect x="52" y="37" width="2" height="2"/><rect x="59" y="37" width="2" height="2"/><rect x="67" y="37" width="2" height="2"/><rect x="74" y="37" width="2" height="2"/><rect x="3" y="41" width="2" height="2"/><rect x="10" y="41" width="2" height="2"/><rect x="18" y="41" width="2" height="2"/><rect x="25" y="41" width="2" height="2"/><rect x="33" y="41" width="2" height="2"/><rect x="40" y="41" width="2" height="2"/><rect x="48" y="41" width="2" height="2"/><rect x="55" y="41" width="2" height="2"/><rect x="63" y="41" width="2" height="2"/><rect x="70" y="41" width="2" height="2"/><rect x="78" y="41" width="2" height="2"/><rect x="-1" y="45" width="2" height="2"/><rect x="7" y="45" width="2" height="2"/><rect x="14" y="45" width="2" height="2"/><rect x="22" y="45" width="2" height="2"/><rect x="29" y="45" width="2" height="2"/><rect x="37" y="45" width="2" height="2"/><rect x="44" y="45" width="2" height="2"/><rect x="52" y="45" width="2" height="2"/><rect x="59" y="45" width="2" height="2"/><rect x="67" y="45" width="2" height="2"/><rect x="74" y="45" width="2" height="2"/><rect x="3" y="49" width="2" height="2"/><rect x="10" y="49" width="2" height="2"/><rect x="18" y="49" width="2" height="2"/><rect x="25" y="49" width="2" height="2"/><rect x="33" y="49" width="2" height="2"/><rect x="40" y="49" width="2" height="2"/><rect x="48" y="49" width="2" height="2"/><rect x="55" y="49" width="2" height="2"/><rect x="63" y="49" width="2" height="2"/><rect x="70" y="49" width="2" height="2"/><rect x="78" y="49" width="2" height="2"/><rect x="-1" y="53" width="2" height="2"/><rect x="7" y="53" width="2" height="2"/><rect x="14" y="53" width="2" height="2"/><rect x="22" y="53" width="2" height="2"/><rect x="29" y="53" width="2" height="2"/><rect x="37" y="53" width="2" height="2"/><rect x="44" y="53" width="2" height="2"/><rect x="52" y="53" width="2" height="2"/><rect x="59" y="53" width="2" height="2"/><rect x="67" y="53" width="2" height="2"/><rect x="74" y="53" width="2" height="2"/><rect x="3" y="57" width="2" height="2"/><rect x="10" y="57" width="2" height="2"/><rect x="18" y="57" width="2" height="2"/><rect x="25" y="57" width="2" height="2"/><rect x="33" y="57" width="2" height="2"/><rect x="40" y="57" width="2" height="2"/><rect x="48" y="57" width="2" height="2"/><rect x="55" y="57" width="2" height="2"/><rect x="63" y="57" width="2" height="2"/><rect x="70" y="57" width="2" height="2"/><rect x="78" y="57" width="2" height="2"/><rect x="-1" y="61" width="2" height="2"/><rect x="7" y="61" width="2" height="2"/><rect x="14" y="61" width="2" height="2"/><rect x="22" y="61" width="2" height="2"/><rect x="29" y="61" width="2" height="2"/><rect x="37" y="61" width="2" height="2"/><rect x="44" y="61" width="2" height="2"/><rect x="52" y="61" width="2" height="2"/><rect x="59" y="61" width="2" height="2"/><rect x="67" y="61" width="2" height="2"/><rect x="74" y="61" width="2" height="2"/><rect x="3" y="64" width="2" height="2"/><rect x="10" y="64" width="2" height="2"/><rect x="18" y="64" width="2" height="2"/><rect x="25" y="64" width="2" height="2"/><rect x="33" y="64" width="2" height="2"/><rect x="40" y="64" width="2" height="2"/><rect x="48" y="64" width="2" height="2"/><rect x="55" y="64" width="2" height="2"/><rect x="63" y="64" width="2" height="2"/><rect x="70" y="64" width="2" height="2"/><rect x="78" y="64" width="2" height="2"/><rect x="-1" y="68" width="2" height="2"/><rect x="7" y="68" width="2" height="2"/><rect x="14" y="68" width="2" height="2"/><rect x="22" y="68" width="2" height="2"/><rect x="29" y="68" width="2" height="2"/><rect x="37" y="68" width="2" height="2"/><rect x="44" y="68" width="2" height="2"/><rect x="52" y="68" width="2" height="2"/><rect x="59" y="68" width="2" height="2"/><rect x="67" y="68" width="2" height="2"/><rect x="74" y="68" width="2" height="2"/><rect x="3" y="72" width="2" height="2"/><rect x="10" y="72" width="2" height="2"/><rect x="18" y="72" width="2" height="2"/><rect x="25" y="72" width="2" height="2"/><rect x="33" y="72" width="2" height="2"/><rect x="40" y="72" width="2" height="2"/><rect x="48" y="72" width="2" height="2"/><rect x="55" y="72" width="2" height="2"/><rect x="63" y="72" width="2" height="2"/><rect x="70" y="72" width="2" height="2"/><rect x="78" y="72" width="2" height="2"/><rect x="-1" y="76" width="2" height="2"/><rect x="7" y="76" width="2" height="2"/><rect x="14" y="76" width="2" height="2"/><rect x="22" y="76" width="2" height="2"/><rect x="29" y="76" width="2" height="2"/><rect x="37" y="76" width="2" height="2"/><rect x="44" y="76" width="2" height="2"/><rect x="52" y="76" width="2" height="2"/><rect x="59" y="76" width="2" height="2"/><rect x="67" y="76" width="2" height="2"/><rect x="74" y="76" width="2" height="2"/><rect x="3" y="80" width="2" height="2"/><rect x="10" y="80" width="2" height="2"/><rect x="18" y="80" width="2" height="2"/><rect x="25" y="80" width="2" height="2"/><rect x="33" y="80" width="2" height="2"/><rect x="40" y="80" width="2" height="2"/><rect x="48" y="80" width="2" height="2"/><rect x="55" y="80" width="2" height="2"/><rect x="63" y="80" width="2" height="2"/><rect x="70" y="80" width="2" height="2"/><rect x="78" y="80" width="2" height="2"/><rect x="-1" y="84" width="2" height="2"/><rect x="7" y="84" width="2" height="2"/><rect x="14" y="84" width="2" height="2"/><rect x="22" y="84" width="2" height="2"/><rect x="29" y="84" width="2" height="2"/><rect x="37" y="84" width="2" height="2"/><rect x="44" y="84" width="2" height="2"/><rect x="52" y="84" width="2" height="2"/><rect x="59" y="84" width="2" height="2"/><rect x="67" y="84" width="2" height="2"/><rect x="74" y="84" width="2" height="2"/><rect x="3" y="88" width="2" height="2"/><rect x="10" y="88" width="2" height="2"/><rect x="18" y="88" width="2" height="2"/><rect x="25" y="88" width="2" height="2"/><rect x="33" y="88" width="2" height="2"/><rect x="40" y="88" width="2" height="2"/><rect x="48" y="88" width="2" height="2"/><rect x="55" y="88" width="2" height="2"/><rect x="63" y="88" width="2" height="2"/><rect x="70" y="88" width="2" height="2"/><rect x="78" y="88" width="2" height="2"/><rect x="-1" y="92" width="2" height="2"/><rect x="7" y="92" width="2" height="2"/><rect x="14" y="92" width="2" height="2"/><rect x="22" y="92" width="2" height="2"/><rect x="29" y="92" width="2" height="2"/><rect x="37" y="92" width="2" height="2"/><rect x="44" y="92" width="2" height="2"/><rect x="52" y="92" width="2" height="2"/><rect x="59" y="92" width="2" height="2"/><rect x="67" y="92" width="2" height="2"/><rect x="74" y="92" width="2" height="2"/><rect x="3" y="96" width="2" height="2"/><rect x="10" y="96" width="2" height="2"/><rect x="18" y="96" width="2" height="2"/><rect x="25" y="96" width="2" height="2"/><rect x="33" y="96" width="2" height="2"/><rect x="40" y="96" width="2" height="2"/><rect x="48" y="96" width="2" height="2"/><rect x="55" y="96" width="2" height="2"/><rect x="63" y="96" width="2" height="2"/><rect x="70" y="96" width="2" height="2"/><rect x="78" y="96" width="2" height="2"/><rect x="-1" y="99" width="2" height="2"/><rect x="7" y="99" width="2" height="2"/><rect x="14" y="99" width="2" height="2"/><rect x="22" y="99" width="2" height="2"/><rect x="29" y="99" width="2" height="2"/><rect x="37" y="99" width="2" height="2"/><rect x="44" y="99" width="2" height="2"/><rect x="52" y="99" width="2" height="2"/><rect x="59" y="99" width="2" height="2"/><rect x="67" y="99" width="2" height="2"/><rect x="74" y="99" width="2" height="2"/><rect x="3" y="103" width="2" height="2"/><rect x="10" y="103" width="2" height="2"/><rect x="18" y="103" width="2" height="2"/><rect x="25" y="103" width="2" height="2"/><rect x="33" y="103" width="2" height="2"/><rect x="40" y="103" width="2" height="2"/><rect x="48" y="103" width="2" height="2"/><rect x="55" y="103" width="2" height="2"/><rect x="63" y="103" width="2" height="2"/><rect x="70" y="103" width="2" height="2"/><rect x="78" y="103" width="2" height="2"/><rect x="-1" y="107" width="2" height="2"/><rect x="7" y="107" width="2" height="2"/><rect x="14" y="107" width="2" height="2"/><rect x="22" y="107" width="2" height="2"/><rect x="29" y="107" width="2" height="2"/><rect x="37" y="107" width="2" height="2"/><rect x="44" y="107" width="2" height="2"/><rect x="52" y="107" width="2" height="2"/><rect x="59" y="107" width="2" height="2"/><rect x="67" y="107" width="2" height="2"/><rect x="74" y="107" width="2" height="2"/><rect x="3" y="111" width="2" height="2"/><rect x="10" y="111" width="2" height="2"/><rect x="18" y="111" width="2" height="2"/><rect x="25" y="111" width="2" height="2"/><rect x="33" y="111" width="2" height="2"/><rect x="40" y="111" width="2" height="2"/><rect x="48" y="111" width="2" height="2"/><rect x="55" y="111" width="2" height="2"/><rect x="63" y="111" width="2" height="2"/><rect x="70" y="111" width="2" height="2"/><rect x="78" y="111" width="2" height="2"/></g></svg>
<div class="a" style="left:1440px;top:126px;width:59px;height:43px;border:2px solid #1e6fc2"></div>
<div class="a" style="left:1392px;top:222px;width:108px;height:2px;background:#c4c4c4"></div>
<div class="a" style="left:1392px;top:222px;width:55px;height:2px;background:#1272d6"></div>
<div class="a" style="left:1441px;top:217px;width:12px;height:12px;border-radius:50%;background:#2586e0"></div>
<div class="t" style="left:1511px;top:216px;font-size:11px">100%</div>
<div class="a" style="left:1225px;top:237px;width:513px;height:2px;background:#cacaca"></div>
<div class="a" style="left:1225px;top:243px;width:68px;height:22px;background:#fff"></div>
<div class="t" style="left:1237px;top:248px;letter-spacing:-0.3px">オプション</div>
<div class="a" style="left:1231px;top:270px;width:500px;height:30px;background:#f0f1f1"></div>
<div class="a" style="left:1231px;top:273px;width:58px;height:25px;background:#dedede"></div>
<div class="t" style="left:1241px;top:279px">パターン</div>
<div class="a" style="left:1289px;top:273px;width:49px;height:25px;background:#fff"></div>
<div class="t" style="left:1301px;top:279px;letter-spacing:-1px">カラー</div>
<div class="a" style="left:1289px;top:297px;width:49px;height:2px;background:#90b8e0"></div>
<div class="a" style="left:1231px;top:298px;width:500px;height:2px;background:#c8c8c8"></div>
<div class="a" style="left:1231px;top:300px;width:500px;height:317px;background:#333333"></div>
<div class="sw" style="left:1232px;background:#ffffff;color:#000;">1</div>
<div class="sw" style="left:1276px;background:#000000;color:#fff;">2</div>
<div class="sw" style="left:1320px;background:#eeede8;color:#000;">3</div>
<div class="sw" style="left:1364px;background:#a5669f;color:#fff;left:1363px;top:301px;width:42px;height:42px;border:2px solid #fff;padding:1px 0 0 3px;border-radius:7px;">4</div>
<div class="sw" style="left:1408px;background:#45b9cc;color:#000;">5</div>
<div class="sw" style="left:1452px;background:#bcc92a;color:#000;">6</div>
<div class="sw" style="left:1496px;background:#deee88;color:#000;">7</div>
<div class="sw" style="left:1540px;background:#ff8c00;color:#000;">8</div>
<div class="sw" style="left:1584px;background:#e54562;color:#000;">9</div>
<div class="sw" style="left:1628px;background:#ffe419;color:#000;">10</div>
<svg class="a" style="left:1220px;top:260px" width="523" height="370" viewBox="1220 260 523 370"><rect x="1229" y="268" width="505" height="352" fill="none" stroke="#ff2300" stroke-width="5"/></svg>

<!-- BOTTOM -->
<div class="a" style="left:1229px;top:636px;width:47px;height:24px;background:#fff"></div>
<div class="t" style="left:1241px;top:642px;letter-spacing:2.5px">通常</div>
<div class="a" style="left:1229px;top:660px;width:48px;height:2px;background:#8fb5dd"></div>
<div class="a" style="left:1276px;top:636px;width:49px;height:25px;background:#dedede"></div>
<div class="t" style="left:1289px;top:642px;letter-spacing:2.5px">整列</div>
<div class="a" style="left:1229px;top:662px;width:201px;height:1px;background:#8a8a8a"></div>
<div class="a" style="left:1430px;top:662px;width:68px;height:1px;background:#c8c8c8"></div>
<div class="a" style="left:1229px;top:662px;width:1px;height:198px;background:#8a8a8a"></div>
<svg class="a" style="left:1229px;top:662px" width="270" height="260" viewBox="0 0 270 260" shape-rendering="crispEdges">
<g fill="#a5669f"><circle cx="117.5" cy="71" r="31.5"/><circle cx="48.5" cy="135" r="31.5"/><circle cx="191.5" cy="135" r="31.5"/><circle cx="117.5" cy="195" r="31.5"/></g>
</svg>
<svg class="a" style="left:1229px;top:662px" width="270" height="260" viewBox="0 0 270 260">
<g stroke="#878787" stroke-width="1" fill="none">
<path d="M117.5 2V192"/><path d="M2 72.5H116"/><path d="M50 137.5H192"/>
<path d="M149.5 162V236"/><path d="M131 162.5H163"/><path d="M84 227.5H163"/><path d="M84.5 206V236"/>
</g>
<g fill="#878787">
<path d="M117.5 0.5L114.5 7.5H120.5Z"/><path d="M117.5 196L114.5 189H120.5Z"/>
<path d="M0.5 72.5L7.5 69.5V75.5Z"/><path d="M117 72.5L110.5 69.5V75.5Z"/>
<path d="M117.5 71L114.5 66H120.5Z"/><path d="M117.5 74L114.5 79H120.5Z"/>
<path d="M47.5 137.5L54.5 134.5V140.5Z"/><path d="M193.5 137.5L186.5 134.5V140.5Z"/>
</g>
</svg>
<div class="inp" style="left:1352px;top:679px;width:56px;height:18px">0</div>
<div class="t" style="left:1419px;top:682px;font-size:11px">mm</div>
<div class="inp" style="left:1246px;top:711px;width:56px;height:18px">0</div>
<div class="inp" style="left:1352px;top:756px;width:56px;height:18px">19.81</div>
<div class="inp" style="left:1284px;top:804px;width:56px;height:18px">19.05</div>
<div class="inp" style="left:1384px;top:846px;width:56px;height:18px">5</div>
<div class="inp" style="left:1319px;top:894px;width:56px;height:18px">5</div>
<div class="a" style="left:1421px;top:884px;width:26px;height:26px;background:#cfcfcf;border:1px solid #bdbdbd"></div>
<svg class="a" style="left:1421px;top:884px" width="26" height="26" viewBox="0 0 26 26"><path d="M17 10.5C17 7 15.2 5 13 5C10.8 5 9.3 7.2 9.3 10C9.3 12.8 11 14.4 13.5 14.4M12.2 11.2C15 11 17 13 17 16C17 18.8 15.2 20.6 13 20.6C10.8 20.6 9.5 18.5 9.5 15.5" fill="none" stroke="#333" stroke-width="1.5"/></svg>
<div class="btn" style="left:1235px;top:946px;width:72px;height:22px;letter-spacing:2.5px">保存</div>
<div class="btn" style="left:1315px;top:946px;width:72px;height:22px">開く</div>
<div class="btn" style="left:1395px;top:946px;width:73px;height:22px;text-align:left;padding-left:7px;font-size:11px">mm</div>
<svg class="a" style="left:1451px;top:951px" width="12" height="12" viewBox="0 0 12 12"><path d="M1 3.5L6 8.5L11 3.5" fill="none" stroke="#555" stroke-width="1.1"/></svg>
<!-- color row -->
<div class="a" style="left:1549px;top:638px;width:24px;height:24px;background:#a5669f;border:3px solid #777"></div>
<div class="a" style="left:1578px;top:643px;width:14px;height:14px;border:1px solid #c8c8c8;border-radius:2px;background:#f4f4f4"></div>
<svg class="a" style="left:1578px;top:643px" width="14" height="14" viewBox="0 0 14 14"><path d="M3 7.2L5.8 10L11 4" fill="none" stroke="#999" stroke-width="1.4"/></svg>
<div class="t" style="left:1596px;top:644px;color:#9a9a9a;letter-spacing:2.5px">描画色</div>
<div class="a" style="left:1644px;top:638px;width:24px;height:24px;background:#deee88;border:1px solid #deee88;box-shadow:inset 0 0 0 1px #888"></div>
<div class="a" style="left:1673px;top:643px;width:14px;height:14px;border:1px solid #9a9a9a;border-radius:2px;background:#fff"></div>
<div class="t" style="left:1691px;top:644px;letter-spacing:2.5px">背景色</div>
<!-- groups -->
<div class="grp" style="left:1509px;top:678px;width:115px;height:97px"></div>
<div class="gt" style="left:1513px;top:671px;letter-spacing:-0.3px">スナップ</div>
<div class="grp" style="left:1628px;top:678px;width:103px;height:97px"></div>
<div class="gt" style="left:1632px;top:671px;letter-spacing:2.7px">距離設定</div>
<div class="a" style="left:1519px;top:695px;width:14px;height:14px;background:#4a96e6;border-radius:2px"></div>
<svg class="a" style="left:1519px;top:695px" width="14" height="14" viewBox="0 0 14 14"><path d="M3 7.2L5.8 10L11 4" fill="none" stroke="#fff" stroke-width="1.6"/></svg>
<div class="t" style="left:1537px;top:695px;letter-spacing:-0.3px">スナップ</div>
<div class="a" style="left:1522px;top:723px;width:15px;height:15px;border-radius:50%;background:#4a96e6"></div>
<div class="a" style="left:1527px;top:728px;width:5px;height:5px;border-radius:50%;background:#fff"></div>
<div class="t" style="left:1541px;top:724px;letter-spacing:-0.7px">リピート</div>
<div class="a" style="left:1522px;top:751px;width:15px;height:15px;border-radius:50%;background:#fff;border:1px solid #8a8a8a"></div>
<div class="t" style="left:1541px;top:752px;letter-spacing:3px">用紙</div>
<div class="a" style="left:1658px;top:709px;width:15px;height:15px;border-radius:50%;background:#4a96e6"></div>
<div class="a" style="left:1663px;top:714px;width:5px;height:5px;border-radius:50%;background:#fff"></div>
<div class="t" style="left:1678px;top:710px;letter-spacing:2.3px">中心</div>
<div class="a" style="left:1658px;top:737px;width:15px;height:15px;border-radius:50%;background:#fff;border:1px solid #8a8a8a"></div>
<div class="t" style="left:1678px;top:738px;letter-spacing:2.3px">間隔</div>
<div class="grp" style="left:1509px;top:785px;width:222px;height:61px"></div>
<div class="gt" style="left:1513px;top:778px;letter-spacing:2.4px">角度</div>
<div class="a" style="left:1563px;top:808px;width:66px;height:22px;background:#fff;border:1px solid #c9c9c9;border-radius:3px"></div>
<div class="a" style="left:1609px;top:809px;width:19px;height:20px;background:#f9f9f9;border-radius:0 2px 2px 0"></div><div class="a" style="left:1608px;top:809px;width:1px;height:20px;background:#cdcdcd"></div>
<div class="t" style="left:1588px;top:813px;width:12px;text-align:right;font-size:11px">0</div>
<svg class="a" style="left:1609px;top:810px" width="20" height="20" viewBox="0 0 20 20"><path d="M5 7.8L9.5 3.2L14 7.8M5 10.2L9.5 14.8L14 10.2" fill="none" stroke="#555" stroke-width="1"/></svg>
<div class="a" style="left:1639px;top:799px;width:40px;height:40px;border-radius:50%;background:#c0c0c0;border:1px solid #555"></div>
<div class="a" style="left:1659px;top:818px;width:10px;height:2px;background:#555"></div>
<div class="a" style="left:1667px;top:815px;width:8px;height:8px;border-radius:50%;background:#333"></div>
<div class="grp" style="left:1509px;top:856px;width:222px;height:73px"></div>
<div class="gt" style="left:1513px;top:850px;letter-spacing:2.8px">不透明度</div>
<div class="a" style="left:1526px;top:882px;width:115px;height:2px;background:#c4c4c4"></div>
<svg class="a" style="left:1634px;top:876px" width="14" height="14" viewBox="0 0 14 14"><path d="M1 1H13V8L7 13L1 8Z" fill="#2483e0"/></svg>
<svg class="a" style="left:1520px;top:890px" width="130" height="12" viewBox="0 0 130 12"><g stroke="#777" stroke-width="1"><path d="M6.5 3V10"/><path d="M18.5 3V8"/><path d="M29.5 3V8"/><path d="M41.5 3V8"/><path d="M52.5 3V8"/><path d="M64.5 3V8"/><path d="M76.5 3V8"/><path d="M87.5 3V8"/><path d="M99.5 3V8"/><path d="M110.5 3V8"/><path d="M121.5 3V10"/></g></svg>
<div class="t" style="left:1523px;top:903px;font-size:11px">0</div>
<div class="t" style="left:1632px;top:903px;font-size:11px">100</div>
<div class="a" style="left:1662px;top:885px;width:60px;height:22px;background:#fff;border:1px solid #cfcfcf;border-radius:2px"></div>
<div class="a" style="left:1701px;top:886px;width:1px;height:20px;background:#d6d6d6"></div>
<div class="t" style="left:1672px;top:889px;width:22px;text-align:right;font-size:11px">100</div>
<svg class="a" style="left:1702px;top:886px" width="20" height="20" viewBox="0 0 20 20"><path d="M5.5 8L10 3.8L14.5 8M5.5 12L10 16.2L14.5 12" fill="none" stroke="#555" stroke-width="1"/></svg>

</body></html>
